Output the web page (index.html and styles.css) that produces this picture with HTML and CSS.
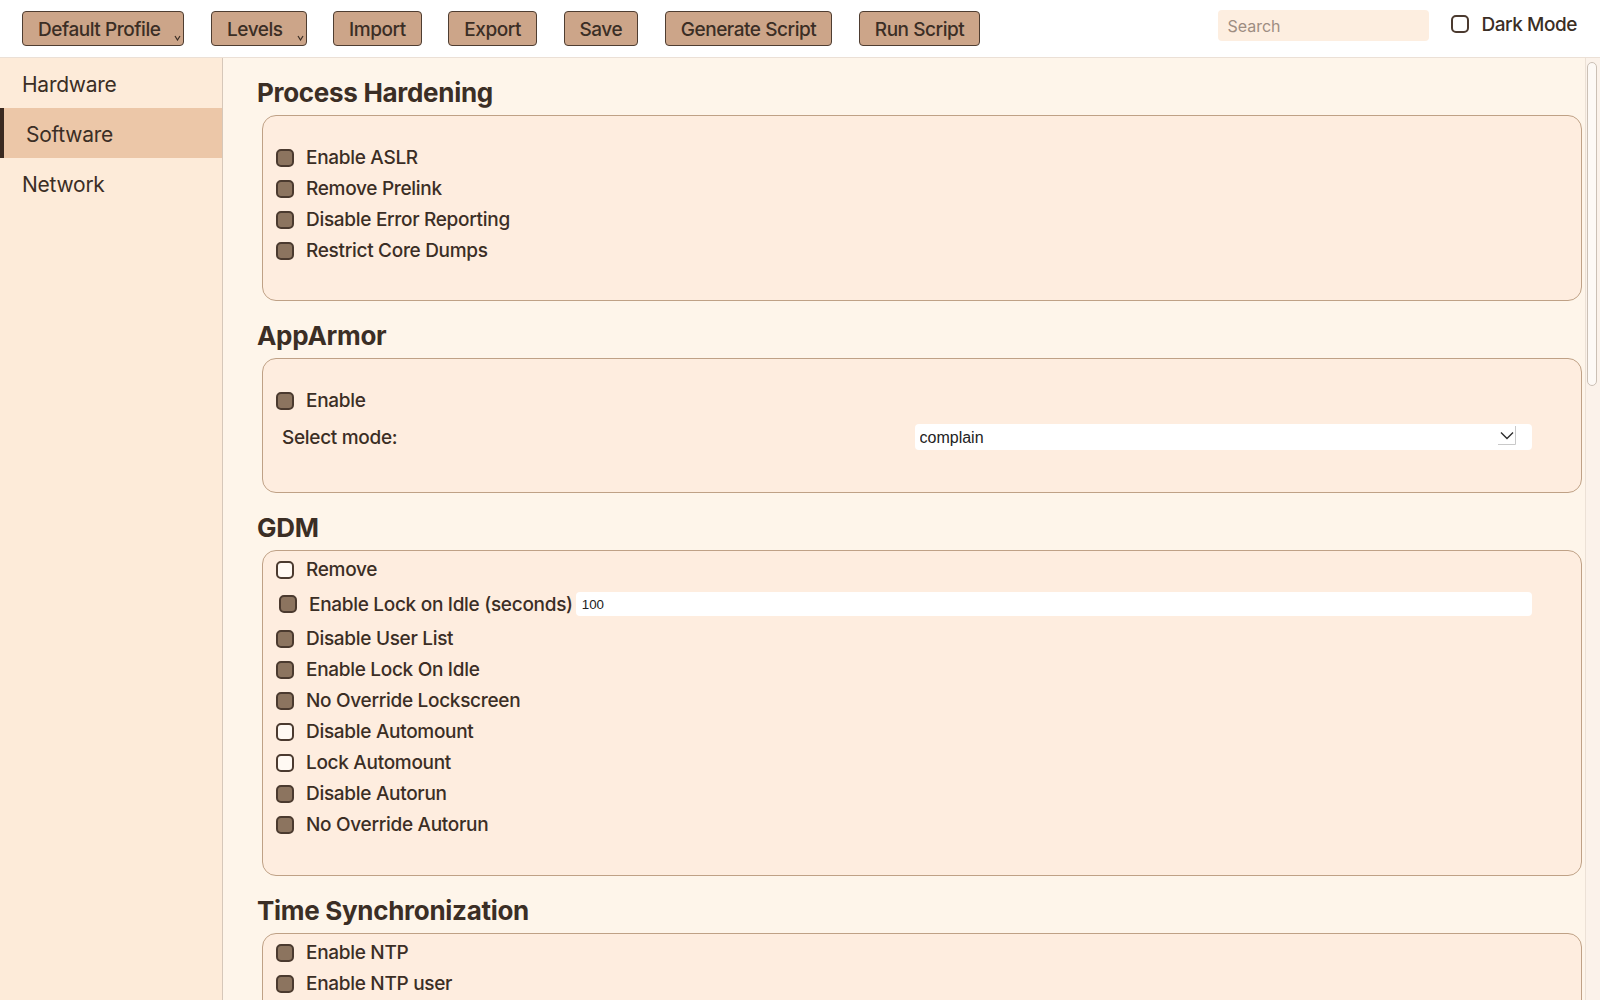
FILE: index.html
```html
<!DOCTYPE html>
<html lang="en">
<head>
<meta charset="utf-8">
<title>Hardening Configurator</title>
<link rel="stylesheet" href="styles.css">
</head>
<body>
<header class="topbar">
  <div class="actions">
    <button class="btn btn-drop">Default Profile<svg class="caret" width="7" height="6" viewBox="0 0 7 6"><path d="M1 1 L3.5 5 L6 1" fill="none" stroke="#3b2e25" stroke-width="1.2"/></svg></button>
    <button class="btn btn-drop">Levels<svg class="caret" width="7" height="6" viewBox="0 0 7 6"><path d="M1 1 L3.5 5 L6 1" fill="none" stroke="#3b2e25" stroke-width="1.2"/></svg></button>
    <button class="btn">Import</button>
    <button class="btn">Export</button>
    <button class="btn">Save</button>
    <button class="btn">Generate Script</button>
    <button class="btn">Run Script</button>
  </div>
  <div class="tools">
    <input class="search" type="text" placeholder="Search">
    <label class="dark-toggle"><input type="checkbox" class="cb cb-plain">Dark Mode</label>
  </div>
</header>
<div class="layout">
  <nav class="sidebar">
    <a class="nav-item">Hardware</a>
    <a class="nav-item active">Software</a>
    <a class="nav-item">Network</a>
  </nav>
  <div class="main-area">
    <main class="content">
      <section class="section">
        <h2 class="section-title">Process Hardening</h2>
        <div class="group group-spaced">
          <label class="row"><input type="checkbox" class="cb" checked>Enable ASLR</label>
          <label class="row"><input type="checkbox" class="cb" checked>Remove Prelink</label>
          <label class="row"><input type="checkbox" class="cb" checked>Disable Error Reporting</label>
          <label class="row"><input type="checkbox" class="cb" checked>Restrict Core Dumps</label>
        </div>
      </section>
      <section class="section">
        <h2 class="section-title">AppArmor</h2>
        <div class="group group-spaced">
          <label class="row"><input type="checkbox" class="cb" checked>Enable</label>
          <div class="field-row">
            <label class="field-label" for="aa-mode">Select mode:</label>
            <div class="select-wrap">
              <select id="aa-mode" class="select">
                <option>complain</option>
                <option>enforce</option>
              </select>
              <svg class="select-arrow" width="18" height="19" viewBox="0 0 18 19"><path d="M3 6.5 L9 12.5 L15 6.5" fill="none" stroke="#2e2e2e" stroke-width="1.4"/><path d="M17.5 0 V18.5 H0" fill="none" stroke="#c9c9c9" stroke-width="1"/></svg>
            </div>
          </div>
        </div>
      </section>
      <section class="section">
        <h2 class="section-title">GDM</h2>
        <div class="group">
          <label class="row"><input type="checkbox" class="cb">Remove</label>
          <div class="row row-input">
            <label class="row-inline"><input type="checkbox" class="cb" checked>Enable Lock on Idle (seconds)</label>
            <input class="num" type="text" value="100">
          </div>
          <label class="row"><input type="checkbox" class="cb" checked>Disable User List</label>
          <label class="row"><input type="checkbox" class="cb" checked>Enable Lock On Idle</label>
          <label class="row"><input type="checkbox" class="cb" checked>No Override Lockscreen</label>
          <label class="row"><input type="checkbox" class="cb">Disable Automount</label>
          <label class="row"><input type="checkbox" class="cb">Lock Automount</label>
          <label class="row"><input type="checkbox" class="cb" checked>Disable Autorun</label>
          <label class="row"><input type="checkbox" class="cb" checked>No Override Autorun</label>
        </div>
      </section>
      <section class="section">
        <h2 class="section-title">Time Synchronization</h2>
        <div class="group">
          <label class="row"><input type="checkbox" class="cb" checked>Enable NTP</label>
          <label class="row"><input type="checkbox" class="cb" checked>Enable NTP user</label>
        </div>
      </section>
    </main>
    <div class="scrollbar" aria-hidden="true">
      <div class="scrollbar-thumb"></div>
    </div>
  </div>
</div>
</body>
</html>
```

FILE: styles.css
```css
* {
  box-sizing: border-box;
}

html,
body {
  margin: 0;
  height: 100%;
}

body {
  font-family: Inter, "Noto Sans", sans-serif;
  color: #3b2e25;
  background: #fef5ea;
  overflow: hidden;
}

/* ---------- top bar ---------- */
.topbar {
  height: 58px;
  background: #ffffff;
  border-bottom: 1px solid #ebe0d6;
  display: flex;
  align-items: center;
  padding: 0 23px 0 22px;
}

.actions {
  display: flex;
  gap: 26.5px;
}

.btn {
  position: relative;
  height: 35px;
  padding: 2px 15px 0;
  font-family: Inter, "Noto Sans", sans-serif;
  font-size: 19px;
  font-weight: 500;
  letter-spacing: -0.45px;
  color: #3b2e25;
  background: #cca589;
  border: 1px solid #4e3d31;
  border-radius: 4px;
}

.btn-drop {
  padding-right: 23px;
}

.caret {
  position: absolute;
  right: 2px;
  bottom: 4px;
}

.tools {
  margin-left: auto;
  align-self: flex-start;
  padding-top: 10px;
  display: flex;
  align-items: flex-start;
  gap: 22px;
}

.search {
  width: 211px;
  height: 31px;
  border: none;
  border-radius: 4px;
  background: #fdeee0;
  padding: 0 9px;
  font-family: Inter, "Noto Sans", sans-serif;
  font-size: 16px;
  color: #3b2e25;
  outline: none;
}

.search::placeholder {
  color: #9d8d82;
}

.dark-toggle {
  height: 28px;
  display: flex;
  align-items: center;
  font-size: 19px;
  font-weight: 500;
  letter-spacing: -0.45px;
}

/* ---------- layout ---------- */
.layout {
  display: flex;
  height: calc(100vh - 58px);
}

.sidebar {
  width: 223px;
  flex: none;
  background: #fdebd9;
  border-right: 1px solid #d6c7b9;
}

.nav-item {
  display: flex;
  align-items: center;
  height: 50px;
  padding: 3px 0 0 22px;
  font-size: 21px;
  font-weight: 400;
  letter-spacing: -0.25px;
  color: #3b2e25;
}

.nav-item.active {
  background: #ecc7a8;
  border-left: 4px solid #3a2a21;
}

.main-area {
  flex: 1;
  display: flex;
  min-width: 0;
}

.content {
  flex: 1;
  min-width: 0;
  overflow: hidden;
  padding: 19px 3px 20px 34px;
}

.scrollbar {
  width: 15px;
  flex: none;
  background: #fbf2ea;
  border-left: 1px solid #ece1d6;
  padding: 4px 3px 0 1px;
}

.scrollbar-thumb {
  height: 324px;
  background: #fdf9f5;
  border: 1px solid #cbc0b5;
  border-radius: 6px;
}

/* ---------- sections ---------- */
.section + .section {
  margin-top: 19px;
}

.section-title {
  margin: 0 0 6px;
  font-size: 26px;
  line-height: 32px;
  font-weight: 700;
  letter-spacing: -0.3px;
}

.group {
  margin-left: 5px;
  background: #feeddf;
  border: 1px solid #bfa186;
  border-radius: 14px;
  padding: 3px 49px 35px 13px;
}

.group-spaced {
  padding-top: 26px;
  padding-bottom: 34px;
}

.row {
  display: flex;
  align-items: center;
  height: 31px;
  font-size: 19px;
  font-weight: 500;
  letter-spacing: -0.3px;
}

.row-input {
  height: 38px;
  padding-left: 3px;
}

.row-inline {
  display: flex;
  align-items: center;
  flex: none;
}

.cb {
  appearance: none;
  -webkit-appearance: none;
  width: 18px;
  height: 18px;
  margin: 0 12px 0 0;
  flex: none;
  border: 2px solid #4b3a2f;
  border-radius: 5px;
  background: #fff9f3;
}

.cb:checked {
  background: #8c745f;
}

.cb-plain {
  background: #ffffff;
}

.num {
  flex: 1;
  height: 24px;
  margin-left: 3px;
  border: none;
  border-radius: 4px;
  background: #ffffff;
  padding: 0 6px;
  font-family: "Liberation Sans", Arial, sans-serif;
  font-size: 13.33px;
  color: #222;
  outline: none;
}

.field-row {
  display: flex;
  align-items: center;
  margin: 8px 0;
  padding-left: 6px;
}

.field-label {
  flex: 1;
  font-size: 19px;
  font-weight: 500;
  letter-spacing: -0.3px;
}

.select-wrap {
  position: relative;
  flex: 0 0 49.4%;
}

.select {
  appearance: none;
  -webkit-appearance: none;
  display: block;
  width: 100%;
  height: 26px;
  border: none;
  border-radius: 4px;
  background: #ffffff;
  padding: 0 5px;
  font-family: "Liberation Sans", Arial, sans-serif;
  font-size: 16px;
  color: #222;
  outline: none;
}

.select-arrow {
  position: absolute;
  right: 16px;
  top: 2px;
  pointer-events: none;
}
```
